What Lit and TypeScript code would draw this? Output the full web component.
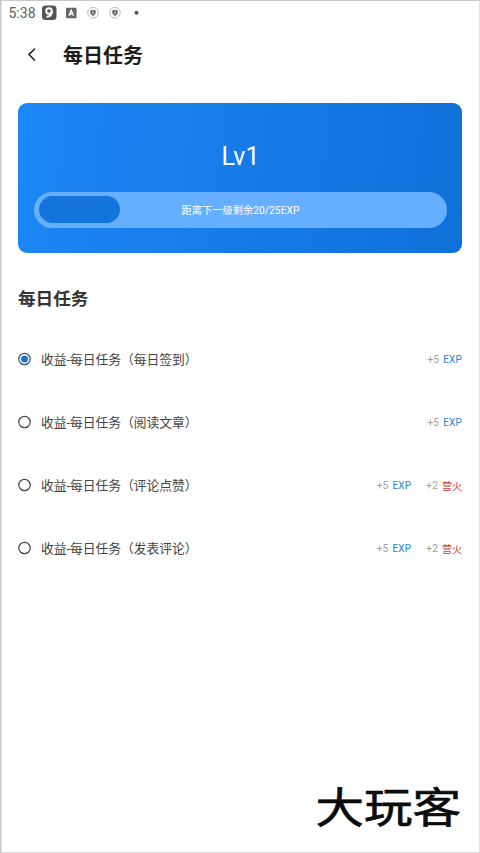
import { LitElement, html, css, svg } from "lit";
import { customElement, property } from "lit/decorators.js";

interface Reward {
  amount: string;
  unit: string;
  kind: "exp" | "fire";
}
interface Task {
  name: string;
  done: boolean;
  rewards: Reward[];
}

const exp: Reward = { amount: "+5", unit: "EXP", kind: "exp" };
const fire: Reward = { amount: "+2", unit: "营火", kind: "fire" };

const tasks: Task[] = [
  { name: "收益-每日任务（每日签到）", done: true, rewards: [exp] },
  { name: "收益-每日任务（阅读文章）", done: false, rewards: [exp] },
  { name: "收益-每日任务（评论点赞）", done: false, rewards: [exp, fire] },
  { name: "收益-每日任务（发表评论）", done: false, rewards: [exp, fire] },
];

@customElement("status-bar")
class StatusBar extends LitElement {
  static styles = css`
    :host {
      display: flex;
      align-items: center;
      height: 23px;
      padding-left: 7.500px;
      color: #606060;
      font-size: 14px;
    }
    .time { width: 32.500px; }
    svg { display: block; flex: none; }
  `;
  render() {
    const shield = svg`
      <circle cx="6" cy="6" r="5.300" fill="#fff" stroke="#a8a8a8" stroke-width=".8"></circle>
      <path d="M6 3 8.800 3.800V6Q8.600 8 6 9.200 3.400 8 3.200 6V3.800Z" fill="#6c6c6c"></path>
      <path d="M6 4.500V7" stroke="#ddd" stroke-width="1"></path>`;
    return html`
      <span class="time">5:38</span>
      <svg width="110" height="16" viewBox="0 0 110 16">
        <rect x="1" y=".5" width="14.500" height="14.500" rx="3.500" fill="#555"></rect>
        <circle cx="8" cy="6" r="2.800" fill="none" stroke="#fff" stroke-width="2"></circle>
        <path d="M10.900 6.200Q11 11.300 5.500 11.800" fill="none" stroke="#fff" stroke-width="2"></path>
        <rect x="25" y="2.700" width="10.500" height="10.500" rx="1" fill="#666"></rect>
        <path d="M27.900 10.700 30.200 5.200 32.500 10.700M28.700 9H31.700" fill="none" stroke="#fff" stroke-width="1.300"></path>
        <g transform="translate(46 1.700)">${shield}</g>
        <g transform="translate(68 1.700)">${shield}</g>
        <circle cx="95.500" cy="7.700" r="2" fill="#555"></circle>
      </svg>
    `;
  }
}

@customElement("level-card")
class LevelCard extends LitElement {
  static styles = css`
    :host {
      display: flex;
      flex-direction: column;
      box-sizing: border-box;
      height: 150px;
      padding: 36px 15px 25px 16px;
      border-radius: 9px;
      background: linear-gradient(97deg, #1d87f6, #1070da);
      color: #fff;
    }
    .level { font-size: 25px; line-height: 36px; text-align: center; }
    .track {
      display: grid;
      align-items: center;
      box-sizing: border-box;
      height: 36px;
      margin-top: 17px;
      padding: 0 5px 1px;
      border-radius: 18px;
      background: #66afff;
    }
    .fill {
      grid-area: 1 / 1;
      height: 27px;
      border-radius: 14px;
      background: #1274dc;
    }
    .note {
      grid-area: 1 / 1;
      text-align: center;
      font-size: 10.200px;
      letter-spacing: .05px;
    }
  `;
  render() {
    return html`
      <div class="level">Lv1</div>
      <div class="track">
        <div class="fill" style="width:20%"></div>
        <div class="note">距离下一级剩余20/25EXP</div>
      </div>
    `;
  }
}

@customElement("task-row")
class TaskRow extends LitElement {
  @property({ attribute: false }) task!: Task;
  static styles = css`
    :host { display: flex; align-items: center; height: 63px; }
    .radio { display: block; flex: none; margin-right: 10px; }
    .name { flex: 1; font-size: 12.750px; color: #444; white-space: nowrap; }
    .rewards { display: flex; gap: 15px; padding-top: 1px; font-size: 10px; }
    .reward { display: flex; align-items: center; gap: 4px; color: #a0a0a0; letter-spacing: .2px; }
    .exp { color: #2b86cf; }
    .fire { color: #cf3c40; letter-spacing: 0; }
  `;
  render() {
    const t = this.task;
    return html`
      <svg class="radio" width="13" height="14" viewBox="0 0 13 14">
        <circle cx="6.500" cy="7" r="5.700" fill="#fff" stroke=${t.done ? "#35506c" : "#444"} stroke-width="1.200"></circle>
        ${t.done ? svg`<circle cx="6.500" cy="7" r="3.500" fill="#1a74cf"></circle>` : ""}
      </svg>
      <span class="name">${t.name}</span>
      <span class="rewards">
        ${t.rewards.map((r) => html`<span class="reward">${r.amount}<span class=${r.kind}>${r.unit}</span></span>`)}
      </span>
    `;
  }
}

@customElement("app-root")
class AppRoot extends LitElement {
  static styles = css`
    :host {
      display: flex;
      flex-direction: column;
      box-sizing: border-box;
      height: 853px;
      border: 1px solid #c8c8c8;
      border-right-color: #e0e0e0;
      border-bottom-color: #d8d8d8;
      box-shadow: inset 1px 0 #e6e6e6;
      background: #fff;
      font-family: Roboto, "Noto Sans CJK SC", sans-serif;
      overflow: hidden;
    }
    header { display: flex; align-items: center; height: 61px; padding-left: 25px; }
    header svg { display: block; margin: 0 25px 0 0; }
    h1, h2 { margin: 0; font-weight: 700; }
    h1 { padding-top: 3px; font-size: 20px; color: #1c1c1c; line-height: 30px; }
    level-card { margin: 18px 17px 0; }
    h2 { margin: 32px 17px 14px; font-size: 17.600px; line-height: 28px; color: #333; }
    .list { padding: 0 17px; }
    .mark {
      margin: auto 18px 15px auto;
      font-size: 48.500px;
      line-height: 56px;
      font-weight: 400;
      color: #0c0c0c;
      -webkit-text-stroke: .8px #0c0c0c;
      transform: scaleY(.87);
    }
  `;
  render() {
    return html`
      <status-bar></status-bar>
      <header>
        <svg width="12" height="16" viewBox="0 0 12 16" fill="none" stroke="#222" stroke-width="1.600">
          <path d="M9 1.500 3 7.500 9 13.500"></path>
        </svg>
        <h1>每日任务</h1>
      </header>
      <level-card></level-card>
      <h2>每日任务</h2>
      <div class="list">${tasks.map((t) => html`<task-row .task=${t}></task-row>`)}</div>
      <div class="mark">大玩客</div>
    `;
  }
}
